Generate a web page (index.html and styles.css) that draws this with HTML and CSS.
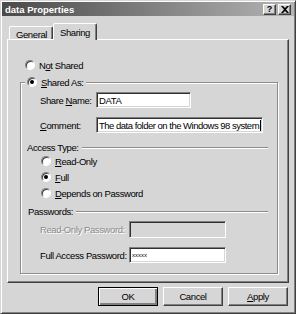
FILE: index.html
```html
<!DOCTYPE html>
<html lang="en">
<head>
    <meta charset="UTF-8">
    <title>data Properties</title>
    <link rel="stylesheet" href="styles.css">
</head>
<body>
    <div class="window">
        <div class="titlebar">
            <span class="title">data Properties</span>
            <span class="tbtn help">?</span>
            <span class="tbtn close">
                <svg width="8" height="7" viewBox="0 0 8 7"><path d="M0 0h2l2 2 2-2h2L5 3.5 8 7H6L4 5 2 7H0l3-3.5z" fill="#000"/></svg>
            </span>
        </div>

        <div class="tabs">
            <span class="tab">General</span>
            <span class="tab active">Sharing</span>
        </div>

        <div class="panel">
            <div class="opt first"><span class="radio"></span>N<u>o</u>t Shared</div>

            <div class="group">
                <div class="legend"><span class="radio on"></span><u>S</u>hared As:</div>

                <div class="field share">
                    <span class="flabel">Share <u>N</u>ame:</span>
                    <span class="input name">DATA</span>
                </div>
                <div class="field comment">
                    <span class="flabel"><u>C</u>omment:</span>
                    <span class="input wide">The data folder on the Windows 98 system<i class="caret"></i></span>
                </div>

                <div class="header access">Access Type:</div>
                <div class="opt sub r1"><span class="radio"></span><u>R</u>ead-Only</div>
                <div class="opt sub r2"><span class="radio on"></span><u>F</u>ull</div>
                <div class="opt sub r3"><span class="radio"></span><u>D</u>epends on Password</div>

                <div class="header pass">Passwords:</div>
                <div class="field ro">
                    <span class="flabel pw disabled">Read-Only Password:</span>
                    <span class="input pwd off"></span>
                </div>
                <div class="field full">
                    <span class="flabel pw">Full Access Password:</span>
                    <span class="input pwd"><span class="stars">xxxxx</span></span>
                </div>
            </div>
        </div>

        <div class="buttons">
            <span class="btn default">OK</span>
            <span class="btn">Cancel</span>
            <span class="btn"><u>A</u>pply</span>
        </div>
    </div>
</body>
</html>
```

FILE: styles.css
```css
body {
    margin: 0;
    background: #d6d6d6;
    font-family: "Liberation Sans", Arial, sans-serif;
    font-size: 9.5px;
    letter-spacing: -0.4px;
    color: #000;
}

u {
    text-decoration: underline;
    text-underline-offset: 1px;
}

.window {
    width: 296px;
    height: 314px;
    box-sizing: border-box;
    padding: 1px;
    border: 1px solid;
    border-color: #d6d6d6 #404040 #404040 #d6d6d6;
    box-shadow: inset 1px 1px #fff, inset -1px -1px #808080;
    background: #d6d6d6;
}

/* barre de titre */
.titlebar {
    height: 14px;
    display: flex;
    align-items: center;
    padding: 0 3px 0 3px;
    background: linear-gradient(to right, #4a4a4a, #b4b4b4);
}

.title {
    flex: 1;
    color: #fff;
    font-weight: bold;
    letter-spacing: 0;
}

.tbtn {
    width: 13px;
    height: 11px;
    box-sizing: border-box;
    display: flex;
    align-items: center;
    justify-content: center;
    background: #d6d6d6;
    border: 1px solid;
    border-color: #fff #404040 #404040 #fff;
    box-shadow: inset -1px -1px #808080;
    font-weight: bold;
    font-size: 9px;
    letter-spacing: 0;
    line-height: 9px;
}

.tbtn.close {
    margin-left: 2px;
}

/* onglets */
.tabs {
    display: flex;
    align-items: flex-end;
    height: 16px;
    margin: 7px 0 0 7px;
}

.tab {
    height: 13px;
    box-sizing: border-box;
    padding: 2px 5px 0 6px;
    border: 1px solid;
    border-bottom: none;
    border-color: #fff #404040 transparent #fff;
    border-radius: 2px 2px 0 0;
    box-shadow: inset -1px 0 #808080;
}

.tab.active {
    height: 17px;
    padding: 3px 6px 0 6px;
    margin-bottom: -1px;
    position: relative;
    background: #d6d6d6;
}

.panel {
    width: 282px;
    height: 244px;
    box-sizing: border-box;
    margin-left: 5px;
    border: 1px solid;
    border-color: #fff #404040 #404040 #fff;
    box-shadow: inset -1px -1px #808080;
    overflow: hidden;
}

/* boutons radio */
.opt {
    height: 12px;
    display: flex;
    align-items: center;
}

.opt.first {
    margin-top: 19px;
    padding-left: 17px;
}

.radio {
    width: 10px;
    height: 10px;
    box-sizing: border-box;
    border-radius: 50%;
    border: 1px solid;
    border-color: #808080 #fff #fff #808080;
    box-shadow: inset 1px 1px #404040;
    background: #fff;
    margin-right: 4px;
    display: flex;
    align-items: center;
    justify-content: center;
    flex: none;
}

.radio.on::after {
    content: "";
    width: 4px;
    height: 4px;
    border-radius: 50%;
    background: #000;
}

/* cadre */
.group {
    margin: 11px 10px 0 12px;
    border: 1px solid #8c8c8c;
    box-shadow: inset 1px 1px #fff, 1px 1px #fff;
    padding-bottom: 10px;
}

.legend {
    display: flex;
    align-items: center;
    width: fit-content;
    height: 12px;
    margin: -7px 0 0 4px;
    padding: 0 3px 0 2px;
    background: #d6d6d6;
}

.field {
    display: flex;
    align-items: center;
    padding-left: 19px;
}

.flabel {
    width: 56px;
    flex: none;
}

.flabel.pw {
    width: 89px;
}

.disabled {
    color: #8c8c8c;
    text-shadow: 1px 1px #fff;
}

.input {
    height: 16px;
    box-sizing: border-box;
    display: flex;
    align-items: center;
    padding-left: 2px;
    background: #fff;
    border: 1px solid;
    border-color: #808080 #fff #fff #808080;
    box-shadow: inset 1px 1px #303030, inset -1px -1px #d6d6d6;
    white-space: nowrap;
    overflow: hidden;
}

.input.name { width: 95px; }
.input.wide {
    width: 167px;
    letter-spacing: -0.5px;
}
.input.pwd { width: 97px; }
.input.off {
    height: 17px;
    background: #d6d6d6;
}

.caret {
    width: 1px;
    height: 11px;
    background: #000;
    margin-left: 1px;
    flex: none;
}

.stars {
    font-size: 6px;
    letter-spacing: 0;
}

.share { margin-top: 4px; }
.comment { margin-top: 9px; }

.header {
    height: 12px;
    display: flex;
    align-items: center;
    margin-right: 9px;
}

.header::after {
    content: "";
    flex: 1;
    height: 1px;
    margin-left: 3px;
    background: #8c8c8c;
    box-shadow: 0 1px #fff;
}

.header.access {
    margin-top: 8px;
    padding-left: 6px;
}

.header.pass {
    margin-top: 6px;
    padding-left: 7px;
}

.opt.sub { padding-left: 20px; }
.r1 { margin-top: 2px; }
.r2, .r3 { margin-top: 4px; }

.ro { margin-top: 4px; }
.full { margin-top: 9px; }

/* boutons du bas */
.buttons {
    display: flex;
    justify-content: flex-end;
    gap: 5px;
    margin-top: 4px;
    padding-right: 6px;
}

.btn {
    width: 60px;
    height: 19px;
    box-sizing: border-box;
    display: flex;
    align-items: center;
    justify-content: center;
    border: 1px solid;
    border-color: #fff #404040 #404040 #fff;
    box-shadow: inset -1px -1px #808080;
}

.btn.default {
    border-color: #000;
    box-shadow: inset 1px 1px #fff, inset -2px -2px #808080;
}
```
